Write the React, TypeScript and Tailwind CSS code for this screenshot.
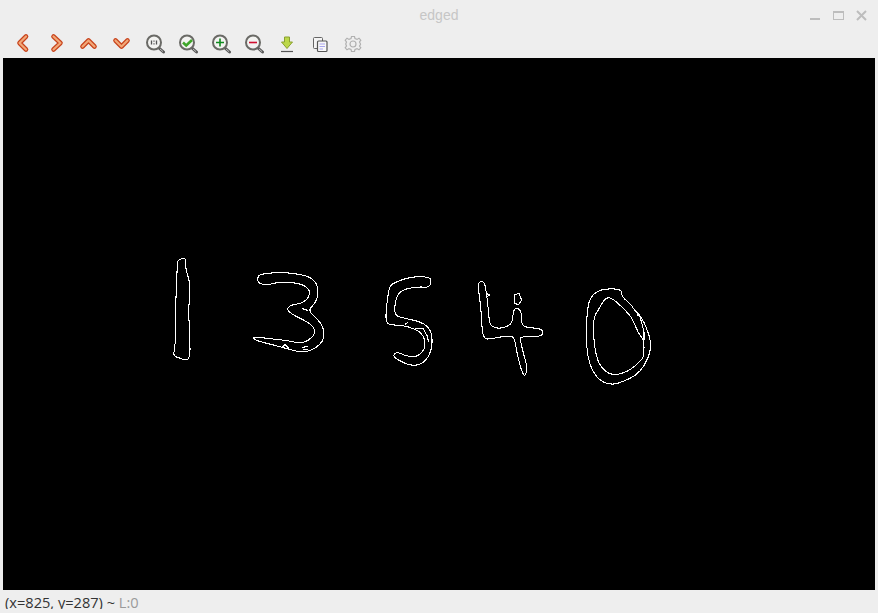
import { ReactNode } from "react";

const Tool = ({ children }: { children: ReactNode }) => (
  <div className="w-[33px] h-[22px] shrink-0">
    <svg width="22" height="22" viewBox="0 0 22 22" fill="none" className="block">
      {children}
    </svg>
  </div>
);

const Chevron = ({ d }: { d: string }) => (
  <>
    <path d={d} stroke="#c8431c" strokeWidth="4.6" strokeLinecap="round" strokeLinejoin="round" />
    <path d={d} stroke="#f2a878" strokeWidth="2.2" strokeLinecap="round" strokeLinejoin="round" />
  </>
);

const Lens = ({ children }: { children?: ReactNode }) => (
  <>
    <path d="M15 16 L19.5 20" stroke="#5a5a5a" strokeWidth="3" strokeLinecap="round" />
    <path d="M16 17 L19 19.6" stroke="#c8c8c8" strokeWidth="0.9" />
    <circle cx="10" cy="10.5" r="7" fill="#f3f3f1" stroke="#6a6a66" strokeWidth="2" />
    {children}
  </>
);

// closed outline through the midpoints of the given points, so the edges come out rounded
const smooth = (points: number[][]) => {
  const mid = (a: number[], b: number[]) => `${(a[0] + b[0]) / 2} ${(a[1] + b[1]) / 2}`;
  const last = points[points.length - 1];
  let d = `M${mid(last, points[0])}`;
  points.forEach((p, i) => {
    d += ` Q${p[0]} ${p[1]} ${mid(p, points[(i + 1) % points.length])}`;
  });
  return d + " Z";
};

const one = [[52,35],[58,27],[75,25],[78,30],[77,55],[84,80],[88,90],[88,150],[86,180],[88,240],[90,270],[90,328],[70,330],[62,325],[45,320],[40,312],[46,290],[46,185],[50,100]];
const three = [[293,82],[300,73],[340,68],[375,67],[430,75],[450,82],[465,95],[473,110],[473,145],[460,165],[445,182],[470,205],[490,230],[493,262],[480,285],[455,300],[430,308],[395,300],[360,290],[320,280],[283,270],[280,260],[320,265],[385,272],[420,280],[445,272],[463,255],[465,238],[450,220],[420,205],[395,192],[380,178],[392,165],[425,160],[445,145],[450,125],[440,110],[415,100],[385,97],[350,97],[325,105],[305,103],[293,95]];
const five = [[168,40],[150,35],[120,35],[85,42],[50,57],[42,70],[35,120],[32,160],[38,180],[80,180],[120,192],[140,205],[150,225],[150,250],[135,270],[115,276],[90,272],[70,262],[58,265],[55,275],[70,285],[100,300],[130,302],[155,285],[170,255],[172,210],[160,185],[135,170],[90,160],[58,152],[60,110],[70,85],[90,72],[130,65],[160,68],[168,55]];
const four = [[310,55],[318,48],[328,52],[333,75],[340,130],[345,193],[410,185],[415,140],[420,130],[435,132],[440,150],[440,187],[495,190],[505,200],[500,215],[440,215],[435,220],[445,265],[458,310],[450,335],[440,320],[425,260],[420,225],[410,210],[345,222],[330,222],[322,205],[318,130],[310,70]];
const zeroOuter = [[62,65],[90,43],[140,41],[155,47],[155,65],[185,90],[190,102],[215,125],[240,185],[243,225],[225,270],[200,300],[160,320],[125,330],[90,318],[65,285],[52,240],[48,180],[52,100]];
const zeroInner = [[72,125],[85,105],[105,70],[122,67],[150,90],[185,125],[205,175],[222,195],[222,240],[215,255],[175,290],[125,303],[90,275],[75,230],[70,170]];

const Digit = ({ x, y, children }: { x: number; y: number; children: ReactNode }) => (
  <g
    transform={`translate(${x} ${y}) scale(0.3333)`}
    fill="none"
    stroke="#fff"
    strokeWidth="3.2"
    strokeLinejoin="round"
    shapeRendering="crispEdges"
  >
    {children}
  </g>
);

const App = () => {
  return (
    <div className="w-[878px] h-[613px] bg-[#eeeeee] flex flex-col overflow-hidden font-['Open_Sans',sans-serif]">
      <div className="h-[30px] shrink-0 flex items-center justify-between relative">
        <div className="w-full text-center text-[14px] text-[#c6c6c6] font-['Liberation_Sans',sans-serif]">edged</div>
        <div className="absolute right-[10px] top-[9px] flex gap-[9px] items-center">
          <svg width="14" height="14" viewBox="0 0 14 14">
            <rect x="2" y="9" width="10" height="2" fill="#bdbdbd" />
          </svg>
          <svg width="14" height="14" viewBox="0 0 14 14" fill="none">
            <rect x="2.5" y="2.5" width="10" height="8" stroke="#bdbdbd" />
            <rect x="2" y="2" width="11" height="2" fill="#bdbdbd" />
          </svg>
          <svg width="14" height="14" viewBox="0 0 14 14" fill="none">
            <path d="M3 2 L12 11 M12 2 L3 11" stroke="#bdbdbd" strokeWidth="2" />
          </svg>
        </div>
      </div>
      <div className="h-[28px] shrink-0 flex items-start pt-[2px] pl-[12px]">
        <Tool>
          <Chevron d="M14 4.5 L7.5 11 L14 17.5" />
        </Tool>
        <Tool>
          <Chevron d="M8.5 4.5 L15.5 11 L8.5 17.5" />
        </Tool>
        <Tool>
          <Chevron d="M4.5 14.5 L10.5 8.5 L16.5 14.5" />
        </Tool>
        <Tool>
          <Chevron d="M4.5 8.5 L10.5 14.5 L16.5 8.5" />
        </Tool>
        <Tool>
          <Lens>
            <path d="M7.5 8.5 V12.5 M12.5 8.5 V12.5" stroke="#555" strokeWidth="1.3" />
            <path d="M10 8.5 V9.8 M10 11.2 V12.5" stroke="#555" strokeWidth="1.2" />
          </Lens>
        </Tool>
        <Tool>
          <Lens>
            <path d="M6 10.5 L9.2 13.5 L15 8" stroke="#3fa62a" strokeWidth="2.6" />
          </Lens>
        </Tool>
        <Tool>
          <Lens>
            <path d="M10 6.5 V14.5 M6 10.5 H14" stroke="#0f8a1f" strokeWidth="1.6" />
          </Lens>
        </Tool>
        <Tool>
          <Lens>
            <path d="M6 10.5 H14" stroke="#d01030" strokeWidth="1.6" />
          </Lens>
        </Tool>
        <Tool>
          <path d="M8.5 5 H13.5 V10 H16.5 L11 16.5 L5.5 10 H8.5 Z" fill="#bcd84a" stroke="#8aa030" strokeWidth="1" />
          <path d="M5 19.5 H17" stroke="#555" strokeWidth="1.2" />
        </Tool>
        <Tool>
          <rect x="4.5" y="5.5" width="9" height="11" rx="1" fill="#f4f4f4" stroke="#666" />
          <rect x="8.5" y="9" width="9.5" height="10.5" rx="1" fill="#f8f8f8" stroke="#555" strokeWidth="1.2" />
          <path d="M10.5 12 H16 M10.5 14.5 H16 M10.5 17 H14" stroke="#a9a6ee" />
        </Tool>
        <Tool>
          <g transform="translate(0 1)">
            <circle cx="11" cy="11" r="3" stroke="#b0b0b0" strokeWidth="1.2" />
            <path
              d="M9.5 3.5 H12.5 L13 5.6 L15 6.4 L17 5.2 L18.8 7.2 L17.5 9 L18.3 10.5 L18.5 11.5 L17.5 13 L18.8 14.8 L17 16.8 L15 15.6 L13 16.4 L12.5 18.5 H9.5 L9 16.4 L7 15.6 L5 16.8 L3.2 14.8 L4.5 13 L3.7 11 L4.5 9 L3.2 7.2 L5 5.2 L7 6.4 L9 5.6 Z"
              stroke="#b0b0b0"
              strokeWidth="1.2"
            />
          </g>
        </Tool>
      </div>
      <div className="mx-[3px] h-[532px] shrink-0 bg-black">
        <svg width="872" height="532" viewBox="3 58 872 532" className="block">
          <Digit x={160} y={250}>
            <path d={smooth(one)} />
            <path d={smooth(three)} />
            <path d="M365 293 L375 284 L387 296 M425 292 L445 290 M430 300 L445 298 M425 175 L445 182" />
          </Digit>
          <Digit x={375} y={265}>
            <path d={smooth(five)} />
            <path d="M90 178 L100 172 M120 190 L145 192 L158 215 L160 232" />
            <path d={smooth(four)} />
            <path d="M417 90 L432 85 L440 105 L430 120 L420 115 Z M333 85 L345 90 L335 95" />
          </Digit>
          <Digit x={570} y={275}>
            <path d={smooth(zeroOuter)} />
            <path d={smooth(zeroInner)} />
            <path d="M200 118 L210 125 L222 170 L222 195" />
          </Digit>
        </svg>
      </div>
      <div className="h-[23px] shrink-0 pl-[5px]">
        <div className="h-[19px] pt-[3px] text-[14.6px] leading-[19px] overflow-hidden text-[#333] whitespace-pre">
          (x=825, y=287) ~ <span className="text-[#9a9a9a]">L:0</span>
        </div>
      </div>
    </div>
  );
};

export default App;
